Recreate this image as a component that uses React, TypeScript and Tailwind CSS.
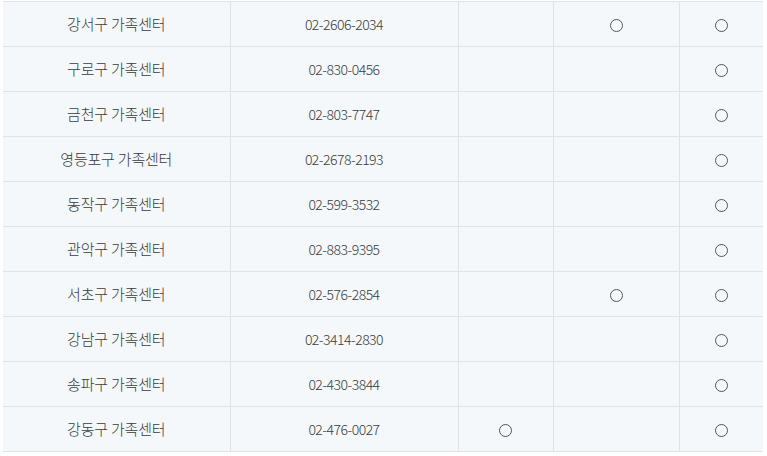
const rows = [
  { name: "강서구 가족센터", tel: "02-2606-2034", a: false, b: true, c: true },
  { name: "구로구 가족센터", tel: "02-830-0456", a: false, b: false, c: true },
  { name: "금천구 가족센터", tel: "02-803-7747", a: false, b: false, c: true },
  { name: "영등포구 가족센터", tel: "02-2678-2193", a: false, b: false, c: true },
  { name: "동작구 가족센터", tel: "02-599-3532", a: false, b: false, c: true },
  { name: "관악구 가족센터", tel: "02-883-9395", a: false, b: false, c: true },
  { name: "서초구 가족센터", tel: "02-576-2854", a: false, b: true, c: true },
  { name: "강남구 가족센터", tel: "02-3414-2830", a: false, b: false, c: true },
  { name: "송파구 가족센터", tel: "02-430-3844", a: false, b: false, c: true },
  { name: "강동구 가족센터", tel: "02-476-0027", a: true, b: false, c: true },
];

const Mark = ({ on }: { on: boolean }) =>
  on ? <span className="inline-block w-[13px] h-[13px] rounded-full border border-[#555] translate-y-[2px]" /> : null;

export default function App() {
  return (
    <div className="w-[767px] h-[456px] bg-white overflow-hidden pt-px pl-[3px]">
      <table
        className="border-collapse table-fixed w-[760px] bg-[#f4f8fb] text-[14px] text-[#3a3a3a] font-light"
        style={{ fontFamily: '"Noto Sans CJK KR", "Noto Sans", sans-serif' }}
      >
        <colgroup>
          <col className="w-[227px]" />
          <col className="w-[228px]" />
          <col className="w-[95px]" />
          <col className="w-[126px]" />
          <col className="w-[84px]" />
        </colgroup>
        <tbody>
          {rows.map((r, i) => (
            <tr key={i} className="h-[45px] border-y border-[#dde3e9]">
              <td className="text-center border-r border-[#dde3e9] text-[15px] tracking-[-0.2px]">{r.name}</td>
              <td className="text-center border-r border-[#dde3e9] tracking-[-0.5px]">{r.tel}</td>
              <td className="text-center border-r border-[#dde3e9]"><Mark on={r.a} /></td>
              <td className="text-center border-r border-[#dde3e9]"><Mark on={r.b} /></td>
              <td className="text-center"><Mark on={r.c} /></td>
            </tr>
          ))}
        </tbody>
      </table>
    </div>
  );
}
